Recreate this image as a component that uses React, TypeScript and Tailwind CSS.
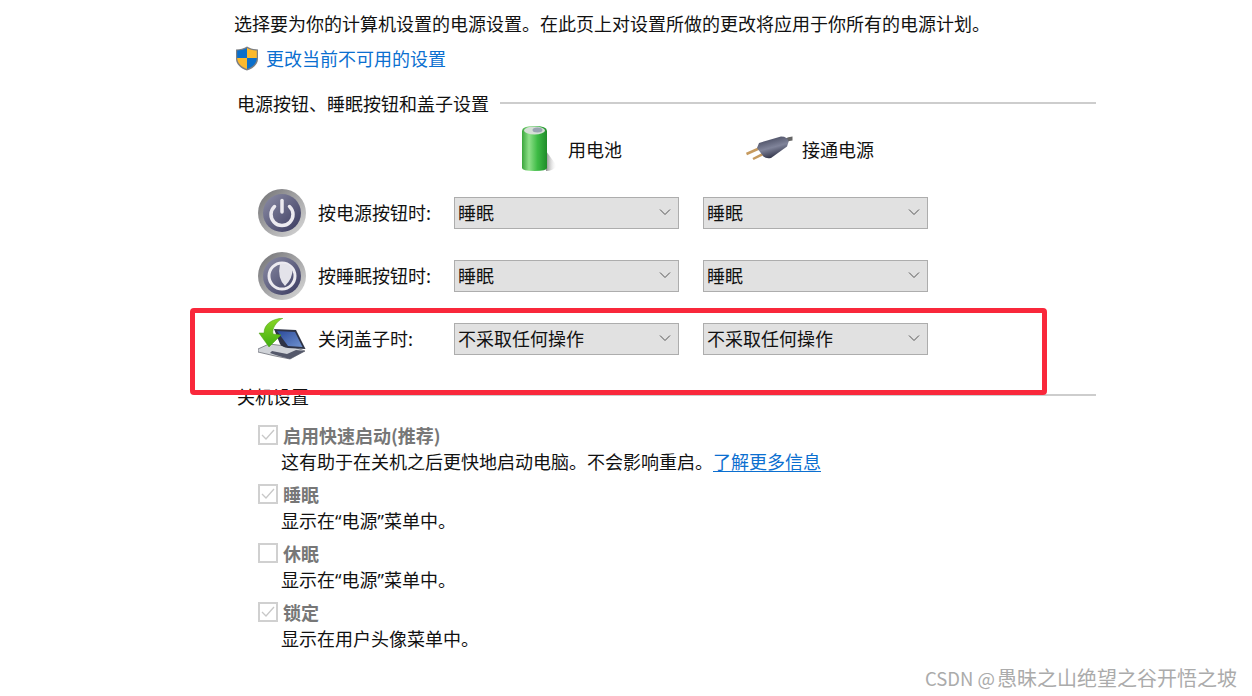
import React from "react";

const font = { fontFamily: '"Noto Sans CJK SC", sans-serif' };

function Shield() {
  return (
    <svg width="24" height="25" viewBox="0 0 24 25" className="shrink-0">
      <path d="M12 .5C9 2.400 5 3.400 1 3.400V13c0 5.500 5 9.500 11 11.500 6-2 11-6 11-11.500V3.400C19 3.400 15 2.400 12 .5Z" fill="#7c7f83" />
      <path d="M12 2V12H2.200V4.500C6 4.300 9.500 3.500 12 2Z" fill="#0b6fcb" />
      <path d="M12 2V12h9.800V4.500C18 4.300 14.500 3.500 12 2Z" fill="#fcb92c" />
      <path d="M12 12v11C7 21 2.400 18 2.200 12Z" fill="#fcb92c" />
      <path d="M12 12v11c5-2 9.600-5 9.800-11Z" fill="#0b6fcb" />
    </svg>
  );
}

function Battery() {
  return (
    <svg width="38" height="48" viewBox="0 0 38 48" className="shrink-0">
      <defs>
        <linearGradient id="bat" x1="0" x2="1" y1="0" y2="0">
          <stop offset="0" stopColor="#3aa63c" />
          <stop offset="0.28" stopColor="#8fe08a" />
          <stop offset="0.62" stopColor="#3dbb45" />
          <stop offset="1" stopColor="#1f8c2a" />
        </linearGradient>
        <linearGradient id="shade" x1="0" x2="1" y1="0" y2="0">
          <stop offset="0" stopColor="#777" stopOpacity="0.85" />
          <stop offset="1" stopColor="#fff" stopOpacity="0" />
        </linearGradient>
      </defs>
      <path d="M26 26 L37 41 Q33 46 26 46Z" fill="url(#shade)" />
      <path d="M2 6 Q2 1 14.500 1 Q27 1 27 6 V43 Q27 46 14.500 46 Q2 46 2 43Z" fill="url(#bat)" />
      <ellipse cx="14.500" cy="5.500" rx="10.500" ry="4" fill="#d5dfd6" />
      <ellipse cx="17.500" cy="5" rx="5" ry="2.500" fill="#9aa4b2" />
    </svg>
  );
}

function Plug() {
  return (
    <svg width="48" height="26" viewBox="0 0 48 26" className="shrink-0">
      <defs>
        <linearGradient id="plug" x1="0" x2="0.4" y1="0" y2="1">
          <stop offset="0" stopColor="#34374c" />
          <stop offset="0.6" stopColor="#80849a" />
          <stop offset="1" stopColor="#34374c" />
        </linearGradient>
      </defs>
      <path d="M40 5 Q44 2.500 47.500 2.500" stroke="#666" strokeWidth="4" fill="none" />
      <path d="M1.500 18 L15 12" stroke="#c69a5e" strokeWidth="2.500" />
      <path d="M8 23 L22 16" stroke="#c69a5e" strokeWidth="2.500" />
      <path d="M14 7 L36 .5 Q43 .5 43.500 6 L42 10.500 L26 22 Q21 23 18.500 20.500 L12 12Z" fill="url(#plug)" />
    </svg>
  );
}

function RoundIcon({ kind, id }: { kind: "power" | "sleep"; id: string }) {
  return (
    <svg width="48" height="48" viewBox="0 0 48 48" className="shrink-0">
      <defs>
        <linearGradient id={`ring${id}`} x1="0" x2="1" y1="0" y2="1">
          <stop offset="0" stopColor="#6f6f72" />
          <stop offset="1" stopColor="#dcdcdc" />
        </linearGradient>
        <linearGradient id={`in${id}`} x1="0" x2="1" y1="0" y2="1">
          <stop offset="0" stopColor="#8d8ea6" />
          <stop offset="1" stopColor="#39395f" />
        </linearGradient>
      </defs>
      <circle cx="24" cy="24" r="24" fill={`url(#ring${id})`} />
      <circle cx="24" cy="24" r="19" fill={`url(#in${id})`} />
      {kind === "power" ? (
        <g fill="none" stroke="#eceaf0" strokeWidth="3.500" strokeLinecap="round">
          <path d="M16.500 17.500 A11 11 0 1 0 31.500 17.500" />
          <path d="M24 11.500 V23" />
        </g>
      ) : (
        <g>
          <circle cx="24" cy="24" r="13" fill="none" stroke="#eceaf0" strokeWidth="3" />
          <path d="M22 12 Q31 11 34.500 17 Q35 26 27 34 Q19 26 22 12Z" fill="#e4e3ea" />
        </g>
      )}
    </svg>
  );
}

function Laptop() {
  return (
    <svg width="48" height="42" viewBox="0 0 48 42" className="shrink-0">
      <defs>
        <linearGradient id="scr" x1="0" x2="1" y1="0" y2="1">
          <stop offset="0" stopColor="#2b4a9a" />
          <stop offset="1" stopColor="#6f92d0" />
        </linearGradient>
        <linearGradient id="arr" x1="0" x2="0" y1="0" y2="1">
          <stop offset="0" stopColor="#8ad628" />
          <stop offset="1" stopColor="#3fae0f" />
        </linearGradient>
      </defs>
      <path d="M0 31 L11 26 L36 29 L47 33 L32 41 Q16 38 0 34Z" fill="#d0d3d8" stroke="#6d7078" strokeWidth="0.800" />
      <path d="M16 11 L38 12 L47.500 31 L30 30 Q24 29 22 26Z" fill="#2e3346" />
      <path d="M19 13 L37 14 L44.500 29 L30 28Z" fill="url(#scr)" />
      <path d="M14 33 L29 36 L38 32 L47 33 L32 41 Q20 38 12 35Z" fill="#54586a" />
      <path d="M25 0 C14 1 6 6 6 15 L1 15 L11 29 L23 17 L15 16 C14 10 18 4 25 0Z" fill="url(#arr)" stroke="#4a9e14" strokeWidth="0.500" />
    </svg>
  );
}

function Select({ value }: { value: string }) {
  return (
    <div className="w-[225px] h-[32px] bg-[#e1e1e1] border border-[#adadad] flex items-center justify-between pl-[3px] pr-[7px] text-[18px] text-[#111]">
      <span>{value}</span>
      <svg width="12" height="7" viewBox="0 0 12 7" fill="none" stroke="#555" strokeWidth="1">
        <path d="M1 .5 L6 5.500 L11 .5" />
      </svg>
    </div>
  );
}

function ActionRow({ icon, label, value }: { icon: React.ReactNode; label: string; value: string }) {
  return (
    <div className="h-[63px] flex items-center pl-[24px]">
      <div className="w-[48px] flex justify-center">{icon}</div>
      <div className="w-[148px] pl-[12px] text-[18px] text-[#111]">{label}</div>
      <div className="flex gap-[24px]">
        <Select value={value} />
        <Select value={value} />
      </div>
    </div>
  );
}

function Option({ checked, title, children, mb }: { checked: boolean; title: string; children: React.ReactNode; mb: string }) {
  return (
    <div className={mb}>
      <div className="h-[26px] flex items-center pl-[24px]">
        <span className="w-[20px] h-[20px] border-2 border-[#d0d0d0] flex items-center justify-center shrink-0">
          {checked && (
            <svg width="14" height="12" viewBox="0 0 14 12" fill="none" stroke="#c8c8c8" strokeWidth="1.300">
              <path d="M1 6 L5 10 L13 1" />
            </svg>
          )}
        </span>
        <span className="ml-[5px] text-[18px] font-bold text-[#777]">{title}</span>
      </div>
      <div className="h-[26px] flex items-center pl-[47px] text-[18px] leading-none text-[#111]">{children}</div>
    </div>
  );
}

function PowerMenuText() {
  return (
    <span>
      显示在<span className="font-['Noto_Sans']">“</span>电源<span className="font-['Noto_Sans']">”</span>菜单中。
    </span>
  );
}

export default function App() {
  return (
    <div style={font} className="relative w-[1252px] h-[696px] overflow-hidden bg-white pl-[234px]">
      <div className="h-[46px] pt-[10px] text-[18px] leading-[26px] text-[#111]">
        选择要为你的计算机设置的电源设置。在此页上对设置所做的更改将应用于你所有的电源计划。
      </div>
      <div className="h-[24px] flex items-center pl-[1px] gap-[7px]">
        <Shield />
        <a className="text-[18px] leading-none text-[#0b6fd0]">更改当前不可用的设置</a>
      </div>
      <div className="mt-[21px] h-[24px] flex items-center w-[862px] pl-[3px]">
        <span className="text-[18px] text-[#111]">电源按钮、睡眠按钮和盖子设置</span>
        <div className="ml-[11px] flex-1 h-[2px] bg-[#cdcdcd]" />
      </div>
      <div className="h-[50px] mt-[9px] flex items-center">
        <div className="w-[511px] pl-[286px] flex items-center">
          <Battery />
          <span className="ml-[10px] text-[18px] text-[#111]">用电池</span>
        </div>
        <div className="flex items-center">
          <Plug />
          <span className="ml-[9px] text-[18px] text-[#111]">接通电源</span>
        </div>
      </div>
      <div className="mt-[7px]">
        <ActionRow icon={<RoundIcon kind="power" id="a" />} label="按电源按钮时:" value="睡眠" />
        <ActionRow icon={<RoundIcon kind="sleep" id="b" />} label="按睡眠按钮时:" value="睡眠" />
        <ActionRow icon={<Laptop />} label="关闭盖子时:" value="不采取任何操作" />
      </div>
      <div className="mt-[14px] h-[24px] flex items-center w-[862px] pl-[3px]">
        <span className="text-[18px] text-[#111]">关机设置</span>
        <div className="ml-[11px] flex-1 h-[2px] bg-[#cdcdcd] mt-[-2px]" />
      </div>
      <div className="mt-[14px]">
        <Option checked title="启用快速启动(推荐)" mb="mb-[7px]">
          这有助于在关机之后更快地启动电脑。不会影响重启。
          <a className="text-[#0b6fd0] underline underline-offset-2">了解更多信息</a>
        </Option>
        <Option checked title="睡眠" mb="mb-[7px]"><PowerMenuText /></Option>
        <Option checked={false} title="休眠" mb="mb-[7px]"><PowerMenuText /></Option>
        <Option checked title="锁定" mb="">显示在用户头像菜单中。</Option>
      </div>
      <div className="absolute left-[190px] top-[308px] w-[857px] h-[87px] border-[5px] border-[#f9283b] rounded-[4px]" />
      <div className="absolute left-[925px] top-[664px] text-[18.500px] leading-[28px] text-[#ababab] whitespace-nowrap">
        CSDN @<span className="ml-[2px] text-[20px]">愚昧之山绝望之谷开悟之坡</span>
      </div>
    </div>
  );
}
